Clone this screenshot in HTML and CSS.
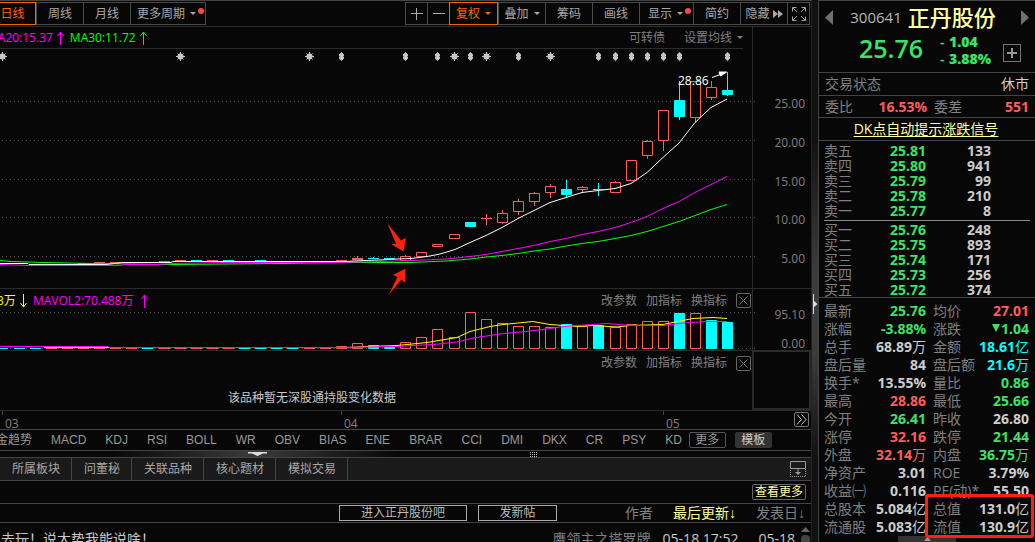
FILE: index.html
```html
<!DOCTYPE html>
<html lang="zh-CN">
<head>
<meta charset="utf-8">
<title>正丹股份 300641</title>
<link rel="stylesheet" href="styles.css">
</head>
<body>
<div class="app">
  <main class="main">
    <nav class="toolbar">
      <div class="group periods">
        <button class="tool active">日线</button><button class="tool">周线</button><button class="tool">月线</button><button class="tool more">更多周期<i class="caret"></i><i class="dot"></i></button>
      </div>
      <div class="group">
        <button class="tool icon" aria-label="放大"><svg width="12" height="12"><path d="M5.500 0v12M0 5.500h12"/></svg></button><button class="tool icon" aria-label="缩小"><svg width="12" height="12"><path d="M0 5.500h12"/></svg></button><button class="tool drop active">复权<i class="caret"></i></button><button class="tool">叠加<i class="caret"></i></button><button class="tool">筹码</button><button class="tool">画线</button><button class="tool show">显示<i class="caret"></i><i class="dot"></i></button><button class="tool">简约</button><button class="tool">隐藏<svg class="fwd" width="10" height="8"><path class="solid" d="M0 0l5 4-5 4zM5 0l5 4-5 4z"/></svg></button><button class="tool icon last" aria-label="全屏"><svg width="14" height="14"><path d="M.5 4.500V.500H4.500M9.500.500h4v4M13.500 9.500v4h-4M4.500 13.500h-4v-4M1 1l4 4M13 1l-4 4M13 13l-4-4M1 13l4-4"/></svg></button>
      </div>
    </nav>

    <section class="split ma-row">
      <div class="legend">
        <span class="ma20">MA20:15.37</span><svg class="arr ma20" width="7" height="14"><path d="M3.500 14V1M.500 5l3-4 3 4"/></svg>
        <span class="ma30">MA30:11.72</span><svg class="arr ma30" width="7" height="14"><path d="M3.500 14V1M.500 5l3-4 3 4"/></svg>
        <div class="ma-actions"><button class="link">可转债</button><button class="link">设置均线<i class="caret"></i></button></div>
      </div>
      <div class="axis"></div>
    </section>

    <svg class="plot price" viewBox="0 49 811 239" preserveAspectRatio="xMaxYMin meet" role="img" aria-label="日K线">
      <defs>
        <g id="star"><path d="M-4.500 0h9M0-4.500v9M-3-3l6 6M3-3l-6 6"/><circle r="2.700"/></g>
        <path id="pair" d="M0-4.500L2.500-2V-.500L1.500 0 2.500.500V2L0 4.500-2.500 2V.500L-1.500 0-2.500-.500V-2z"/>
      </defs>
      <path class="rule" d="M752.500 49V288"/>
      <path class="grid" d="M-1998 101.500H755M-1998 140.500H755M-1998 179.500H755M-1998 217.500H755M-1998 256.500H755"/>
      <g class="marks">
        <use href="#star" x="2.500" y="56.500"/><use href="#star" x="180.500" y="56.500"/><use href="#star" x="309.500" y="56.500"/><use href="#star" x="454.500" y="56.500"/><use href="#star" x="486.500" y="56.500"/><use href="#star" x="550.500" y="56.500"/>
        <use href="#pair" x="341.500" y="56.500"/><use href="#pair" x="405.500" y="56.500"/><use href="#pair" x="437.500" y="56.500"/><use href="#pair" x="470.500" y="56.500"/><use href="#pair" x="518.500" y="56.500"/><use href="#pair" x="598.500" y="56.500"/><use href="#pair" x="615.500" y="56.500"/><use href="#pair" x="631.500" y="56.500"/><use href="#pair" x="647.500" y="56.500"/><use href="#pair" x="663.500" y="56.500"/><use href="#pair" x="679.500" y="56.500"/><use href="#pair" x="727.500" y="56.500"/>
      </g>
      <path class="up" d="M94 262.500h11M110 262.500h11M159 261.500h11M175 260.500h11M207 260.500h11M320 261.500h11M336 260.500h11M352 258.500h11v1h-11M357.500 256v3
        M400.500 256.500h10v4h-10zM405.500 255v1M416.500 252.500h10v4h-10zM432.500 244.500h10v2h-10zM449.500 234.500h10v4h-10zM481 218.500h11M486.500 214v11
        M497.500 213.500h10v9h-10zM502.500 210v3M502.500 223v1M513.500 201.500h10v10h-10zM518.500 199v2M518.500 212v3M529.500 193.500h10v8h-10zM534.500 192v1M534.500 202v4
        M545.500 186.500h10v6h-10zM550.500 184v2M550.500 193v5M577.500 187.500h10v2h-10zM582.500 186v1M582.500 190v2M610.500 182.500h10v10h-10zM615.500 181v1
        M626.500 160.500h10v20h-10zM642.500 141.500h10v14h-10zM647.500 140v1M647.500 156v3M658.500 110.500h10v30h-10zM663.500 141v10M690.500 81.500h10v36h-10zM695.500 118v5
        M706.500 87.500h10v10h-10zM711.500 81v6M711.500 98v2"/>
      <path class="down" d="M78 263.500h11M191 260.500h11M223 260.500h11M255 260.500h11M368 258.500h11M373.500 257v2M384 258.500h11M465.500 222.500h10v4h-10zM561.500 189.500h10v5h-10zM566.500 180v17M593 189.500h11M598.500 183v13
        M674.500 100.500h10v16h-10zM679.500 81v39M722.500 90.500h10v4h-10zM727.500 72v24"/>
      <polyline class="line green" points="0,260.500 11,261.500 44,262.500 92,263.500 173,264.500 283,263.500 333,262.500 411,262.500 446,261 470,259 486,257 502,255.500 518,253.500 534,251 550,249 566,246 582,243.500 598,241.500 615,238.500 631,235.500 647,231.500 663,226.500 679,221.500 695,215.500 711,209.500 727,204.500"/>
      <polyline class="line magenta" points="0,264.500 28,265.500 120,265.500 125,264.500 156,264.500 173,263.500 220,262.500 333,262.500 380,261.500 413,260.500 446,259 470,256.500 486,254.500 502,251.500 518,248.500 534,245.500 550,241.500 566,238.500 582,234.500 598,231.500 615,227.500 631,222.500 647,216.500 663,208.500 679,201.500 695,192.500 711,184.500 727,176.500"/>
      <polyline class="line white" points="0,263.500 28,263.500 29,264.500 106,264.500 123,262.500 171,262.500 173,261.500 345,261.500 365,260.500 380,260 397,259 411,258.500 427,256.500 440,254 455,249.500 470,242.500 486,235.500 502,227.500 518,218.500 534,210.500 550,202.500 566,197.500 582,192.500 598,190.500 615,188.500 631,183.500 647,172.500 663,157.500 679,143 695,122.500 711,107.500 727,99"/>
      <text class="peak" x="678" y="85">28.86</text>
      <path class="peak-arrow" d="M712 77.500l14-5M719 72l7.500 0-6 4z"/>
      <path class="hint" d="M387.300 223.300L401 240.500l5-2.800L403.500 251.500 391 244l5-.3zM389 294.500l8.500-17.500-4.500-2 12.200-6.300v14.300l-3.700-3.500z"/>
      <g class="ticks"><text x="805" y="108">25.00</text><text x="805" y="147">20.00</text><text x="805" y="186">15.00</text><text x="805" y="224">10.00</text><text x="805" y="263">5.00</text></g>
    </svg>

    <section class="split panel-head">
      <div class="legend">
        <span class="vol1">3万</span><svg class="arr vol1" width="7" height="14"><path d="M3.500 0V13M.500 9l3 4 3-4"/></svg>
        <span class="ma20">MAVOL2:70.488万</span><svg class="arr vol2 ma20" width="7" height="14"><path d="M3.500 14V1M.500 5l3-4 3 4"/></svg>
        <div class="actions"><button class="link">改参数</button><button class="link">加指标</button><button class="link">换指标</button><button class="close" aria-label="关闭"><svg width="9" height="9"><path d="M.5.500l8 8M8.500.500l-8 8"/></svg></button></div>
      </div>
      <div class="axis"></div>
    </section>
    <svg class="plot volume" viewBox="0 312 811 38" preserveAspectRatio="xMaxYMin meet" role="img" aria-label="成交量">
      <path class="rule" d="M752.500 312V350"/>
      <path class="grid" d="M-1998 312.500H755M-1998 348.500H755"/>
      <path class="up" d="M46 348.500h11M62 348.500h11M78 348.500h11M94 348.500h11M110 348.500h11M126 348.500h11M159 348.500h11M175 348.500h11M191 348.500h11M207 348.500h11M223 348.500h11M304 348.500h11M320 348.500h11
        M336.500 348.500v-2h10v2zM352.500 348.500v-5h10v5zM400.500 348.500v-6h10v6zM416.500 348.500v-11h10v11zM432.500 348.500v-19h10v19zM449.500 348.500v-11h10v11zM465.500 348.500v-36h10v36zM481.500 348.500v-29h10v29zM497.500 348.500v-25h10v25zM513.500 348.500v-22h10v22zM529.500 348.500v-22h10v22zM545.500 348.500v-21h10v21zM577.500 348.500v-22h10v22zM610.500 348.500v-21h10v21zM626.500 348.500v-24h10v24zM642.500 348.500v-27h10v27zM658.500 348.500v-27h10v27zM690.500 348.500v-35h10v35z"/>
      <path class="down" d="M0 348.500h8M14 348.500h11M30 348.500h11M142 348.500h11M239 348.500h11M255 348.500h11M271 348.500h11M287 348.500h11M368.500 348.500v-3h10v3zM384.500 348.500v-1h10v1zM561.500 348.500v-24h10v24zM593.500 348.500v-23h10v23zM674.500 348.500v-35h10v35zM706.500 348.500v-28h10v28zM722.500 348.500v-26h10v26z"/>
      <polyline class="line yellow" points="44,347.500 347,347.500 367,346.500 397,345.500 427,342.500 457,337.500 470,331.500 490,326.500 503,324.500 533,321.500 550,324.500 577,326.500 593,325.500 617,327 630,325.500 663,324.500 680,321 693,318.500 713,317.500 727,318.500"/>
      <polyline class="line magenta" points="0,346.500 108,346.500 109,347.500 340,347.500 397,346.500 413,345.500 433,344.500 457,342 473,338 500,334 520,332 543,329.500 560,327 577,325.500 607,323.500 630,325.500 663,325.500 683,323 707,321.500 727,321.500"/>
      <g class="ticks"><text x="805" y="319">95.10</text><text x="805" y="348">0.00</text></g>
    </svg>

    <section class="split holdings">
      <div class="holdings-body">
        <div class="actions"><button class="link">改参数</button><button class="link">加指标</button><button class="link">换指标</button><button class="close" aria-label="关闭"><svg width="9" height="9"><path d="M.5.500l8 8M8.500.500l-8 8"/></svg></button></div>
        <p class="empty">该品种暂无深股通持股变化数据</p>
      </div>
      <div class="axis boxed"></div>
    </section>

    <section class="dates">
      <svg class="plot" viewBox="0 409 793 20" preserveAspectRatio="xMaxYMin meet"><path class="tick" d="M2.500 409v4M341.500 409v4M663.500 409v4"/><g class="months"><text x="5" y="426">03</text><text x="344" y="426">04</text><text x="666" y="426">05</text></g></svg>
      <button class="scroll-end" aria-label="最新"><svg width="11" height="11"><path d="M1 .5l4.500 5-4.500 5M5.500.5l4.500 5-4.500 5"/></svg></button>
    </section>

    <nav class="indicators">
      <a>金趋势</a><a>MACD</a><a>KDJ</a><a>RSI</a><a>BOLL</a><a>WR</a><a>OBV</a><a>BIAS</a><a>ENE</a><a>BRAR</a><a>CCI</a><a>DMI</a><a>DKX</a><a>CR</a><a>PSY</a><a>KD</a>
      <span class="chips"><button class="chip">更多</button><button class="chip filled">模板</button></span>
    </nav>

    <div class="drawer"><svg width="19" height="5"><path d="M0 0h19v1.500l-4 0-5.500 2.500L4 1.500H0z"/></svg><i class="grip"></i></div>

    <nav class="tabs">
      <button class="tab">所属板块</button><button class="tab">问董秘</button><button class="tab">关联品种</button><button class="tab">核心题材</button><button class="tab">模拟交易</button>
      <button class="dock" aria-label="停靠"><svg width="16" height="16"><path d="M.5.500h15v7H.500zM8 8v5"/><path class="dash" d="M.500 9v6.500h15V8"/><path class="solid" d="M5 11h6l-3 3z"/></svg></button>
    </nav>

    <div class="more-row"><button class="see-more">查看更多</button></div>

    <div class="post-head">
      <button class="post-btn wide">进入正丹股份吧</button><button class="post-btn">发新帖</button>
      <div class="cols"><span>作者</span><button class="sort current">最后更新<span class="dir">↓</span></button><button class="sort">发表日<span class="dir">↓</span></button></div>
    </div>
    <div class="post">
      <a class="title">出去玩！说大势我能说啥！</a>
      <span class="author">鹰领主之塔罗牌</span><time class="updated">05-18 17:52</time><time class="posted">05-18</time>
      <div class="scrollbar"><svg width="9" height="5"><path d="M4.500 0L9 5H0z"/></svg><i></i></div>
    </div>
  </main>

  <div class="splitter"><svg width="5" height="20"><path d="M1 0v7l3.500 3L1 13v7H0V0z"/></svg></div>

  <aside class="quote">
    <header class="head">
      <button class="nav" aria-label="上一只"><svg width="8" height="15"><path d="M8 0v15L0 7.500z"/></svg></button>
      <h1><span class="code">300641</span>正丹股份</h1>
      <button class="nav" aria-label="下一只"><svg width="8" height="15"><path d="M0 0v15l8-7.500z"/></svg></button>
      <div class="now">
        <strong class="last-price">25.76</strong>
        <div class="change"><span>-</span><b>1.04</b><span>-</span><b>3.88%</b></div>
        <button class="add" aria-label="加自选"><svg width="10" height="10"><path d="M5 0v10M0 5h10"/></svg></button>
      </div>
    </header>
    <div class="status"><span>交易状态</span><span class="rest">休市</span></div>
    <div class="ratio"><span>委比</span><b class="r">16.53%</b><span>委差</span><b class="r">551</b></div>
    <div class="signal"><a href="#">DK点自动提示涨跌信号</a></div>

    <table class="book sell">
      <tr><th>卖五</th><td class="g">25.81</td><td>133</td></tr><tr><th>卖四</th><td class="g">25.80</td><td>941</td></tr><tr><th>卖三</th><td class="g">25.79</td><td>99</td></tr><tr><th>卖二</th><td class="g">25.78</td><td>210</td></tr><tr><th>卖一</th><td class="g">25.77</td><td>8</td></tr>
    </table>
    <hr>
    <table class="book buy">
      <tr><th>买一</th><td class="g">25.76</td><td>248</td></tr><tr><th>买二</th><td class="g">25.75</td><td>893</td></tr><tr><th>买三</th><td class="g">25.74</td><td>171</td></tr><tr><th>买四</th><td class="g">25.73</td><td>256</td></tr><tr><th>买五</th><td class="g">25.72</td><td>374</td></tr>
    </table>

    <div class="stats-wrap">
      <table class="stats">
        <tr><th>最新</th><td class="g">25.76</td><th>均价</th><td class="r">27.01</td></tr>
        <tr><th>涨幅</th><td class="g">-3.88%</td><th>涨跌</th><td class="g"><svg width="8" height="8"><path d="M0 0h8L4 8z"/></svg>1.04</td></tr>
        <tr><th>总手</th><td>68.89<i>万</i></td><th>金额</th><td class="c">18.61<i>亿</i></td></tr>
        <tr><th>盘后量</th><td>84</td><th>盘后额</th><td class="c">21.6<i>万</i></td></tr>
        <tr><th>换手*</th><td>13.55%</td><th>量比</th><td class="g">0.86</td></tr>
        <tr><th>最高</th><td class="r">28.86</td><th>最低</th><td class="g">25.66</td></tr>
        <tr><th>今开</th><td class="g">26.41</td><th>昨收</th><td>26.80</td></tr>
        <tr><th>涨停</th><td class="r">32.16</td><th>跌停</th><td class="g">21.44</td></tr>
        <tr><th>外盘</th><td class="r">32.14<i>万</i></td><th>内盘</th><td class="g">36.75<i>万</i></td></tr>
        <tr><th>净资产</th><td>3.01</td><th>ROE</th><td>3.79%</td></tr>
        <tr><th>收益㈠</th><td>0.116</td><th>PE(动)*</th><td>55.50</td></tr>
        <tr><th>总股本</th><td>5.084<i>亿</i></td><th>总值</th><td>131.0<i>亿</i></td></tr>
        <tr><th>流通股</th><td>5.083<i>亿</i></td><th>流值</th><td>130.9<i>亿</i></td></tr>
      </table>
      <div class="highlight"></div>
    </div>
    <div class="handle"><svg width="7" height="4"><path d="M3.500 0L7 4H0z"/></svg></div>
  </aside>
</div>
</body>
</html>
```
FILE: styles.css
```css
:root {
  --bg: #070707;
  --line: #2b2b2b;
  --line-strong: #444;
  --muted: #808080;
  --text: #a8a8a8;
  --pale: #ffffa0;
  --green: #3be465;
  --red: #ff5c5c;
  --cyan: #00ffff;
  --orange: #ff6400;
}

* { box-sizing: border-box; }

body {
  margin: 0;
  background: var(--bg);
  color: var(--text);
  font: 12px/16px "Open Sans", "Noto Sans CJK SC", sans-serif;
  white-space: nowrap;
  overflow: hidden;
}

button {
  margin: 0;
  padding: 0;
  border: 0;
  background: none;
  color: inherit;
  font: inherit;
}

svg { display: block; fill: none; stroke: currentColor; }
svg .solid { fill: currentColor; stroke: none; }

.app {
  display: grid;
  grid-template-columns: minmax(0, 1fr) 6px 217px;
  height: 100vh;
  overflow: hidden;
}

.main { min-width: 0; overflow: hidden; border-top: 1px solid var(--line-strong); border-right: 1px solid #222; }

/* Toolbar */
.toolbar {
  display: flex;
  justify-content: space-between;
  padding: 1px 1px 1px 0;
  border-bottom: 1px solid var(--line);
}
.group { display: flex; }
.periods { margin-left: -11px; }
.tool {
  display: flex;
  align-items: center;
  justify-content: center;
  width: 47px;
  height: 23px;
  border: solid #4a4a4a;
  border-width: 1px 0 1px 1px;
}
.tool.active { border: 1px solid var(--orange); color: var(--orange); }
.tool.more { width: 76px; padding-left: 6px; border-right-width: 1px; justify-content: flex-start; }
.tool.icon { width: 22px; }
.tool.last { width: 23px; border-right-width: 1px; }
.tool.drop { width: 49px; }
.tool.show { width: 54px; padding-left: 8px; justify-content: flex-start; }
.caret {
  margin-left: 5px;
  border: solid transparent;
  border-width: 3px 3px 0;
  border-top-color: currentColor;
}
.dot { width: 6px; height: 6px; margin: 0 0 6px 2px; border-radius: 50%; background: #ff4545; }
.fwd { margin-left: 3px; }

/* Chart stack */
.split { display: grid; grid-template-columns: minmax(0, 1fr) 59px; }
.axis { border-left: 1px solid var(--line); }
.legend { display: flex; align-items: center; }
.arr { margin: 0 6px 0 4px; }
.arr.vol2 { margin-left: 8px; }
.ma20 { color: #ff00ff; }
.ma30 { color: #00ff00; }
.vol1 { color: #ffff00; }
.ma-row { height: 22px; }
.ma-row .legend { margin-right: 9px; border-bottom: 1px solid var(--line); }
.ma-row .legend > .ma20:first-child { margin-left: -13px; }
.ma-actions { display: flex; gap: 19px; margin-left: auto; color: var(--muted); }
.link { display: flex; align-items: center; color: var(--muted); }
.panel-head { height: 24px; border-top: 1px solid var(--line); }
.panel-head .legend > .vol1:first-child { margin-left: -3px; }
.actions { display: flex; align-items: center; gap: 9px; margin-left: auto; padding-right: 1px; }
.actions.link { justify-content: flex-end; }
.close {
  display: grid;
  place-items: center;
  width: 15px;
  height: 15px;
  border: 1px solid #666;
  border-radius: 2px;
  color: var(--muted);
}

.plot { width: 100%; overflow: visible; font-size: 12px; }
.plot text { stroke: none; fill: var(--muted); }
.price { height: 239px; }
.volume { height: 38px; }
.rule { stroke: var(--line); }
.grid { stroke: #505050; stroke-dasharray: 1 3; }
.marks { fill: #c8c8c8; stroke: #c8c8c8; }
#pair { stroke: none; }
.up { stroke: var(--red); }
.down { stroke: var(--cyan); fill: var(--cyan); }
.line { stroke-width: 1; }
.green { stroke: #00ff00; }
.magenta { stroke: #ff00ff; }
.white { stroke: #fff; }
.yellow { stroke: #ffff00; }
.ticks { text-anchor: end; }
.plot .peak { fill: #fff; }
.peak-arrow { fill: #fff; stroke: #fff; }
.hint { fill: #ff2010; stroke: none; }

.holdings { height: 60px; border-top: 1px solid var(--line); }
.holdings-body { display: flex; flex-direction: column; justify-content: space-between; padding: 4px 0; }
.empty { margin: 0 128px 0 0; text-align: center; color: #c8c8c8; }
.axis.boxed { border: 2px solid var(--line); border-top-width: 1px; }

.dates { display: flex; gap: 1px; height: 19px; padding-right: 2px; border-top: 1px solid var(--line); }
.dates .plot { flex: 1; min-width: 0; height: 20px; }
.tick { stroke: #444; }
.scroll-end {
  display: grid;
  place-items: center;
  width: 15px;
  height: 15px;
  margin-top: 1px;
  border: 1px solid #777;
  border-radius: 2px;
  color: #ccc;
}

.indicators {
  display: flex;
  align-items: center;
  gap: 19px;
  height: 22px;
  margin-left: -4px;
  border: solid var(--line-strong);
  border-width: 1px 0;
  font-family: "Liberation Sans", "Noto Sans CJK SC", sans-serif;
  color: #999;
}
.chips { display: flex; gap: 9px; margin-left: -12px; }
.chip { width: 37px; height: 16px; border: 1px solid #555; border-radius: 2px; line-height: 14px; }
.chip.filled { border-color: #333; background: #333; color: #ccc; }

.drawer {
  display: flex;
  align-items: center;
  gap: 263px;
  height: 6px;
  padding-left: 248px;
  background: linear-gradient(90deg, #070707 110px, #383838 245px, #383838 260px, #070707 400px);
}
.drawer svg { fill: #ddd; stroke: none; }
.grip {
  width: 8px;
  height: 5px;
  background: repeating-linear-gradient(transparent 0 1px, var(--bg) 1px 2px), repeating-linear-gradient(90deg, #bbb 0 1px, transparent 1px 2px);
}

.tabs {
  display: flex;
  height: 24px;
  padding-right: 5px;
  border: solid var(--line-strong);
  border-width: 1px 0;
  background: #1a1a1a;
}
.tab { padding: 0 11px 0 12px; border-right: 1px solid var(--line-strong); }
.dock { margin-left: auto; color: #999; }
.dash { stroke-dasharray: 1 1; }

.more-row { display: flex; justify-content: flex-end; align-items: center; height: 22px; padding-right: 5px; }
.see-more { height: 16px; padding: 0 2px; border: 1px solid #666; border-radius: 2px; line-height: 14px; color: var(--pale); }

.post-head {
  display: flex;
  align-items: center;
  gap: 11px;
  height: 20px;
  padding: 0 6px 0 339px;
  border: solid var(--line-strong);
  border-width: 1px 0;
}
.post-btn { width: 79px; height: 16px; border: 1px solid #aaa; line-height: 14px; color: #bbb; }
.post-btn.wide { width: 128px; }
.cols { display: flex; gap: 20px; margin-left: auto; font-size: 14px; color: var(--muted); }
.sort.current { color: var(--pale); }
.dir { font-family: "Liberation Sans", sans-serif; }
.post { display: flex; padding: 8px 1px 0 0; font-size: 14px; line-height: 16px; color: #c8c8c8; }
.title { flex: 1; margin-left: -13px; }
.author { color: var(--muted); margin-right: 12px; }
.updated { margin-right: 20px; }
.scrollbar { display: grid; justify-items: center; align-content: start; gap: 3px; margin: -4px 0 0 6px; }
.scrollbar svg { fill: #666; stroke: none; }
.scrollbar i { width: 9px; height: 20px; border-radius: 4px; background: #444; }

/* Splitter between the chart and the quote */
.splitter {
  display: flex;
  align-items: center;
  justify-content: center;
  padding-top: 66px;
  background: linear-gradient(#111 25%, #3c3c3c 50%, #3c3c3c 65%, #111 85%);
}
.splitter svg { fill: #ddd; stroke: none; }

/* Quote panel */
.quote {
  display: flex;
  flex-direction: column;
  border: solid var(--line-strong);
  border-width: 1px 0 0 1px;
  font-size: 14px;
  color: var(--muted);
}
.head {
  display: grid;
  grid-template-columns: auto 1fr auto;
  align-content: start;
  align-items: center;
  height: 72px;
  padding: 4px 6px 0;
  border-bottom: 1px solid var(--line-strong);
}
.nav { color: #707070; }
.nav svg { fill: currentColor; stroke: none; }
h1 {
  display: flex;
  align-items: center;
  justify-content: center;
  gap: 6px;
  margin: 0;
  padding-right: 8px;
  font-size: 22px;
  font-weight: 500;
  line-height: 24px;
  color: var(--pale);
}
.code { font-size: 15px; font-weight: 400; color: #b8b8b8; }
.now {
  grid-column: 1 / -1;
  display: flex;
  align-items: flex-start;
  padding: 2px 8px 0 34px;
  color: var(--green);
}
.last-price { font-size: 25px; font-weight: 600; line-height: 34px; }
.change { display: grid; grid-template-columns: 9px auto; margin: 2px 0 0 17px; line-height: 17px; font-weight: 600; }
.add { display: grid; place-items: center; width: 18px; height: 18px; margin: 13px 0 0 auto; border: 1px solid #777; color: #999; }
.add svg { stroke-width: 2; }
.status, .ratio, .signal { border-bottom: 1px solid var(--line-strong); padding: 0 6px; }
.status { display: flex; justify-content: space-between; align-items: center; height: 23px; }
.rest { color: #ccc; }
.ratio { display: grid; grid-template-columns: 39px 63px 33px 1fr; align-items: center; height: 22px; }
.ratio b { text-align: right; }
.ratio span:nth-of-type(2) { padding-left: 7px; }
.signal { height: 23px; padding-right: 8px; line-height: 22px; text-align: center; }
.signal a { color: var(--pale); text-underline-offset: 2px; }

table { border-collapse: collapse; table-layout: fixed; width: 100%; }
th { padding: 0; text-align: left; font-weight: 400; }
td { padding: 0; text-align: right; font-weight: 700; color: #ccc; }
td i { font-style: normal; font-weight: 400; }
td svg { display: inline-block; fill: currentColor; stroke: none; margin-right: 1px; vertical-align: 2px; }
.g { color: var(--green); }
.r { color: var(--red); }
.c { color: var(--cyan); }
.book { width: calc(100% - 49px); margin: 2px 0 0 5px; line-height: 15px; }
.book td:nth-child(2) { width: 60px; }
.book td:nth-child(3) { width: 65px; }
.book th, .book td { height: 15px; }
hr { width: calc(100% - 10px); margin: 2px 5px 0; border: 0; border-top: 1px solid #888; }
.book.buy { margin-top: 1px; }
.stats-wrap { position: relative; padding: 4px 6px 0 5px; border-top: 1px solid var(--line-strong); }
.stats { line-height: 18px; }
.stats th, .stats td { height: 18px; }
.stats th:first-child { width: 50px; }
.stats td:nth-child(2) { width: 52px; }
.stats th:nth-child(3) { padding-left: 7px; width: 53px; }
.highlight { position: absolute; right: 1px; bottom: -2px; width: 109px; height: 44px; border: 3px solid #ff2010; border-radius: 3px; }
.handle { display: grid; place-items: center; width: 58px; height: 6px; margin-left: 79px; background: #333; }
.handle svg { fill: #999; stroke: none; }
```
